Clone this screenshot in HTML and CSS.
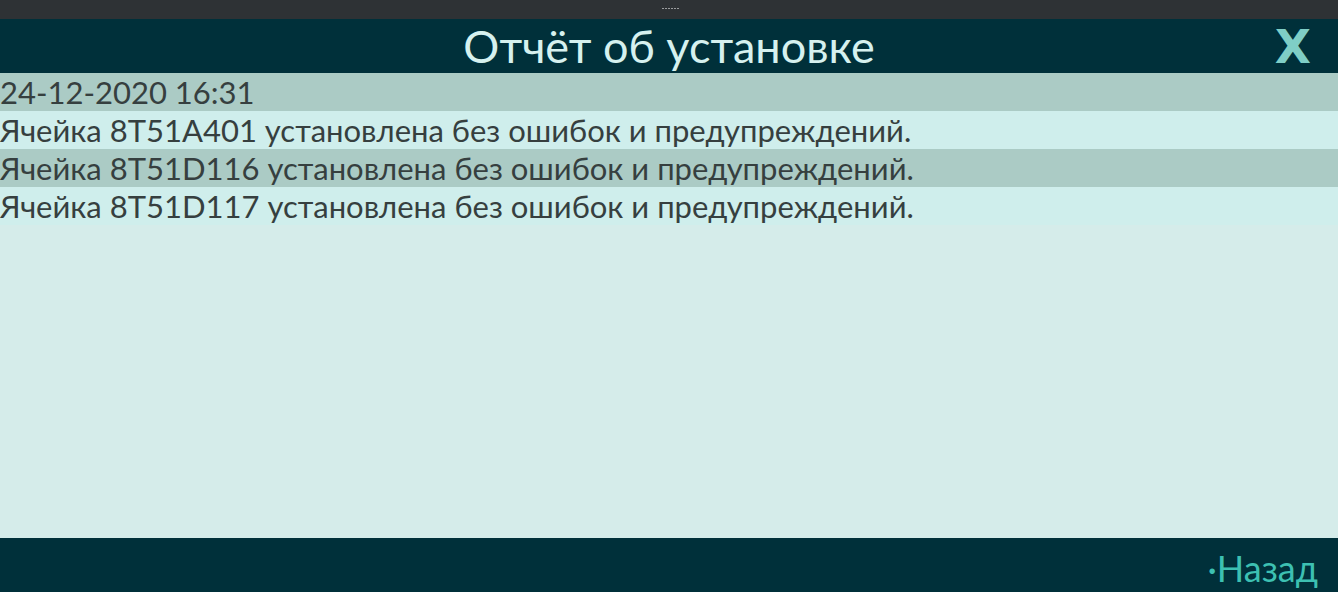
FILE: index.html
```html
<!DOCTYPE html>
<html lang="ru">
<head>
<meta charset="utf-8">
<link rel="stylesheet" href="styles.css">
</head>
<body>
<div class="app">
  <div class="grip"><span class="dots"><i></i><i></i><i></i><i></i><i></i><i></i></span></div>
  <header class="head">
    <h1 class="title">Отчёт об установке</h1>
    <span class="close">X</span>
  </header>
  <main class="log">
    <div class="row dark">24-12-2020 16:31</div>
    <div class="row">Ячейка 8T51A401 установлена без ошибок и предупреждений.</div>
    <div class="row dark">Ячейка 8T51D116 установлена без ошибок и предупреждений.</div>
    <div class="row">Ячейка 8T51D117 установлена без ошибок и предупреждений.</div>
  </main>
  <footer class="foot">
    <span class="back">·Назад</span>
  </footer>
</div>
</body>
</html>
```
FILE: styles.css
```css
* { box-sizing: border-box; }
html, body { margin: 0; padding: 0; }
body { font-family: Lato, "Noto Sans", sans-serif; width: 1338px; height: 592px; overflow: hidden; }
.app { display: flex; flex-direction: column; height: 592px; }
.grip { height: 19px; background: #2e3235; display: flex; justify-content: center; align-items: flex-start; }
.dots { display: flex; gap: 1px; margin-top: 8px; margin-left: 3px; }
.dots i { width: 2px; height: 1px; background: #9a9c9e; display: block; }
.head { height: 54px; background: #00303a; position: relative; display: flex; justify-content: center; align-items: center; }
.title { margin: 0; font-weight: 400; font-size: 45px; color: #d6f1ef; line-height: 1; margin-top: 0; }
.close { position: absolute; right: 27px; top: 4px; font-family: "DejaVu Sans", sans-serif; font-size: 47px; line-height: 47px; color: #7fcec6; font-weight: 700; }
.log { flex: 1; background: #d5ecea; }
.row { height: 38px; line-height: 38px; font-size: 31px; color: #363f3f; background: #cfeeec; padding-left: 0; white-space: nowrap; }
.row.dark { background: #abcbc5; }
.foot { height: 54px; background: #00303a; display: flex; justify-content: flex-end; align-items: center; padding-right: 20px; }
.back { font-size: 36px; color: #3dc0b2; margin-top: 5px; }
```
